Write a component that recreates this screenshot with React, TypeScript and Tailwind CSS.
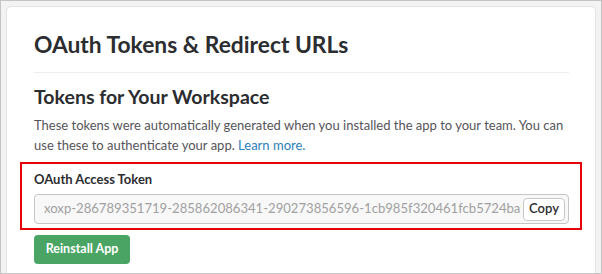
import React from "react";

export default function App() {
  return (
    <div
      className="w-[602px] h-[274px] overflow-hidden border border-[#c4c4c4] bg-[#f3f3f3] pl-[5px] pr-[5px] pt-[5px]"
      style={{ fontFamily: "Lato, 'Noto Sans', sans-serif" }}
    >
      <div className="h-[300px] rounded-[5px] border border-[#e4e4e4] bg-white pl-[27px] pr-[26px] pt-[23px]">
        <h1 className="text-[22.8px] leading-[29px] font-bold text-[#2c2d30]">
          OAuth Tokens &amp; Redirect URLs
        </h1>
        <div className="mt-[13px] h-px bg-[#eeeeee]" />
        <h2 className="mt-[11px] text-[19.5px] leading-[26px] font-bold text-[#2c2d30]">
          Tokens for Your Workspace
        </h2>
        <p className="mt-[5px] -mr-[4px] text-[13px] leading-[20px] text-[#555459]">
          These tokens were automatically generated when you installed the app to your team. You can use these to authenticate your app.{" "}
          <span className="text-[#2a80b9]">Learn more.</span>
        </p>
        <div className="mt-[7px] -ml-[14px] -mr-[13px] border-2 border-[#e8000b] pl-[12px] pr-[11px] pt-[6px] pb-[4px]">
          <div className="text-[13px] leading-[18px] font-bold text-[#2c2d30]">OAuth Access Token</div>
          <div className="mt-[6px] flex h-[30px] items-center rounded-[4px] border border-[#c5c5c5] bg-[#f8f8f8] pl-[9px] pr-[3px]">
            <div className="min-w-0 flex-1 overflow-hidden whitespace-nowrap text-[13.1px] text-[#a0a0a1]">
              xoxp-286789351719-285862086341-290273856596-1cb985f320461fcb5724ba9e
            </div>
            <div className="ml-[2px] flex h-[23px] w-[42px] items-center justify-center rounded-[4px] border border-[#c8c8c8] bg-white text-[13px] font-semibold text-[#2c2d30]">
              Copy
            </div>
          </div>
        </div>
        <div className="mt-[5px] flex h-[29px] w-[96px] items-center justify-center rounded-[4px] bg-[#4aa564] text-[12.5px] font-bold text-white">
          Reinstall App
        </div>
      </div>
    </div>
  );
}
